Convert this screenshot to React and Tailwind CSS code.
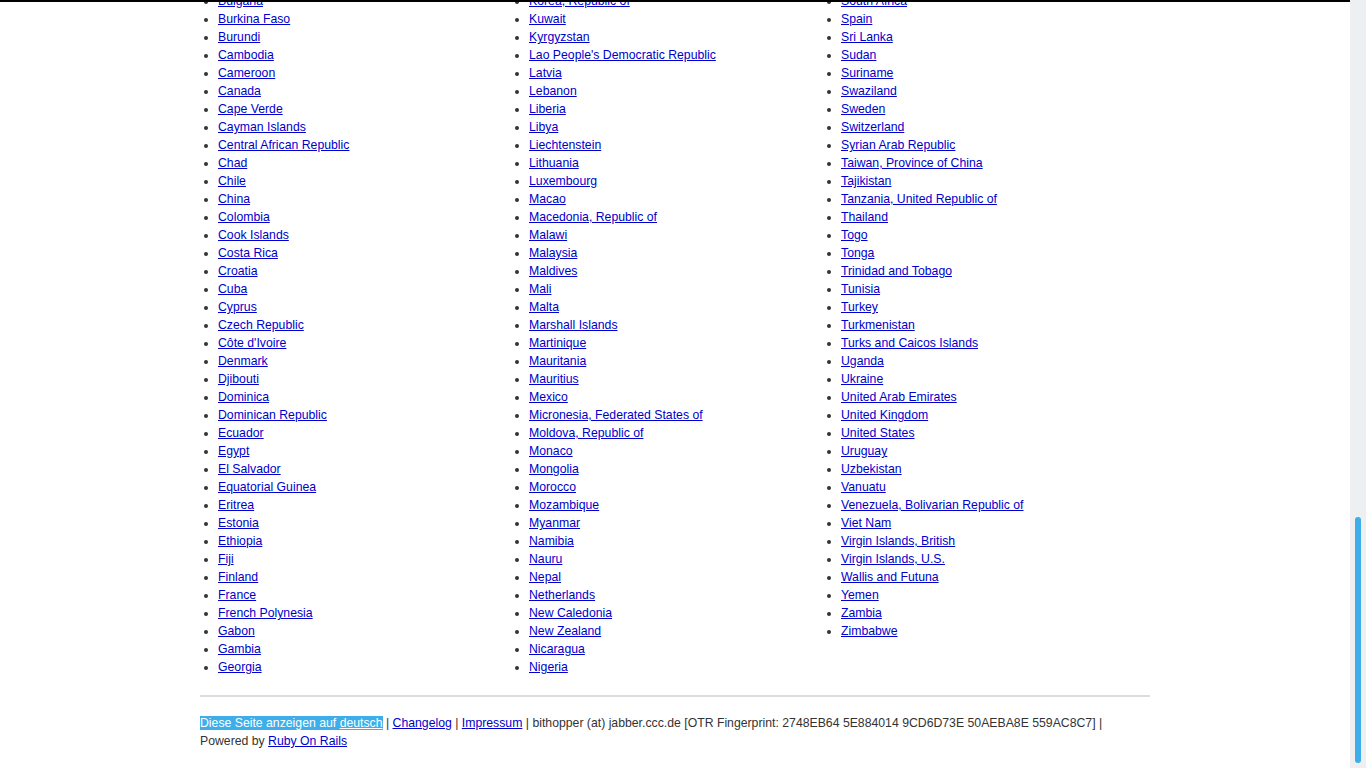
const col1 = [
  'Bulgaria', 'Burkina Faso', 'Burundi', 'Cambodia', 'Cameroon', 'Canada', 'Cape Verde',
  'Cayman Islands', 'Central African Republic', 'Chad', 'Chile', 'China', 'Colombia',
  'Cook Islands', 'Costa Rica', 'Croatia', 'Cuba', 'Cyprus', 'Czech Republic',
  "Côte d'Ivoire", 'Denmark', 'Djibouti', 'Dominica', 'Dominican Republic', 'Ecuador',
  'Egypt', 'El Salvador', 'Equatorial Guinea', 'Eritrea', 'Estonia', 'Ethiopia', 'Fiji',
  'Finland', 'France', 'French Polynesia', 'Gabon', 'Gambia', 'Georgia',
];

const col2 = [
  'Korea, Republic of', 'Kuwait', 'Kyrgyzstan', "Lao People's Democratic Republic",
  'Latvia', 'Lebanon', 'Liberia', 'Libya', 'Liechtenstein', 'Lithuania', 'Luxembourg',
  'Macao', 'Macedonia, Republic of', 'Malawi', 'Malaysia', 'Maldives', 'Mali', 'Malta',
  'Marshall Islands', 'Martinique', 'Mauritania', 'Mauritius', 'Mexico',
  'Micronesia, Federated States of', 'Moldova, Republic of', 'Monaco', 'Mongolia',
  'Morocco', 'Mozambique', 'Myanmar', 'Namibia', 'Nauru', 'Nepal', 'Netherlands',
  'New Caledonia', 'New Zealand', 'Nicaragua', 'Nigeria',
];

const col3 = [
  'South Africa', 'Spain', 'Sri Lanka', 'Sudan', 'Suriname', 'Swaziland', 'Sweden',
  'Switzerland', 'Syrian Arab Republic', 'Taiwan, Province of China', 'Tajikistan',
  'Tanzania, United Republic of', 'Thailand', 'Togo', 'Tonga', 'Trinidad and Tobago',
  'Tunisia', 'Turkey', 'Turkmenistan', 'Turks and Caicos Islands', 'Uganda', 'Ukraine',
  'United Arab Emirates', 'United Kingdom', 'United States', 'Uruguay', 'Uzbekistan',
  'Vanuatu', 'Venezuela, Bolivarian Republic of', 'Viet Nam', 'Virgin Islands, British',
  'Virgin Islands, U.S.', 'Wallis and Futuna', 'Yemen', 'Zambia', 'Zimbabwe',
];

const CountryList = ({ items }) => (
  <ul className="list-disc pl-[18px]">
    {items.map((name) => (
      <li key={name} className="leading-[18px]">
        <a href="#" className="text-[#0000cc] underline">
          {name}
        </a>
      </li>
    ))}
  </ul>
);

const App = () => {
  return (
    <div
      className="flex h-screen overflow-hidden bg-white text-[12.25px] text-[#333]"
      style={{ fontFamily: '"Liberation Sans", Arial, sans-serif' }}
    >
      <div className="relative flex-1 overflow-hidden">
        {/* top edge of the fixed header */}
        <div className="absolute left-0 right-0 top-0 h-[2px] bg-black" />

        <div className="ml-[200px] -mt-[8px] w-[950px]">
          {/* Country columns */}
          <div className="grid grid-cols-[311px_312px_1fr]">
            <CountryList items={col1} />
            <CountryList items={col2} />
            <CountryList items={col3} />
          </div>

          <hr className="mt-[19px] border-0 border-t-2 border-[#ddd]" />

          {/* Footer */}
          <div className="mt-[17px] leading-[18px]">
            <span className="bg-[#3daee9] text-white">
              Diese Seite anzeigen auf{' '}
              <a href="#" className="underline">deutsch</a>
            </span>{' '}
            | <a href="#" className="text-[#0000cc] underline">Changelog</a> |{' '}
            <a href="#" className="text-[#0000cc] underline">Impressum</a> | bithopper (at)
            jabber.ccc.de [OTR Fingerprint: 2748EB64 5E884014 9CD6D73E 50AEBA8E 559AC8C7] |
            <br />
            Powered by <a href="#" className="text-[#0000cc] underline">Ruby On Rails</a>
          </div>
        </div>
      </div>

      {/* Scrollbar */}
      <div className="flex w-4 flex-col bg-[#eeeff1] pt-[517px] pb-[5px] items-center">
        <div className="h-full w-[6px] rounded-full bg-[#3daee9]" />
      </div>
    </div>
  );
};

export default App;
